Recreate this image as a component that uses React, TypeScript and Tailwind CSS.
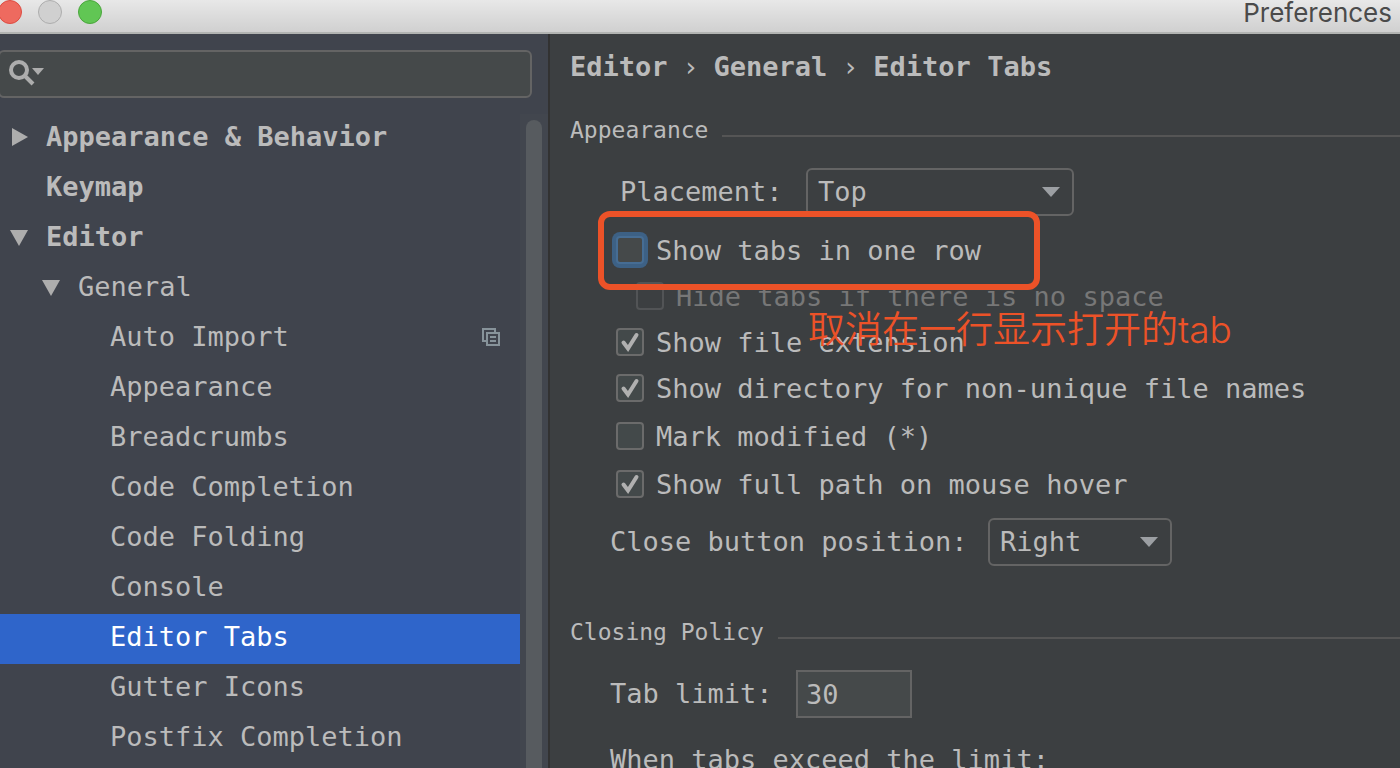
import React, { useState } from 'react';
import clsx from 'clsx';

type TreeItem = {
  label: string;
  level: 0 | 1 | 2;
  arrow?: 'right' | 'down';
  copyable?: boolean;
};

const treeItems: TreeItem[] = [
  { label: 'Appearance & Behavior', level: 0, arrow: 'right' },
  { label: 'Keymap', level: 0 },
  { label: 'Editor', level: 0, arrow: 'down' },
  { label: 'General', level: 1, arrow: 'down' },
  { label: 'Auto Import', level: 2, copyable: true },
  { label: 'Appearance', level: 2 },
  { label: 'Breadcrumbs', level: 2 },
  { label: 'Code Completion', level: 2 },
  { label: 'Code Folding', level: 2 },
  { label: 'Console', level: 2 },
  { label: 'Editor Tabs', level: 2 },
  { label: 'Gutter Icons', level: 2 },
  { label: 'Postfix Completion', level: 2 },
];

const levelPadding = ['pl-2', 'pl-10', 'pl-[72px]'];

const TreeArrow: React.FC<{ direction?: 'right' | 'down' }> = ({ direction }) => (
  <svg className="w-6 h-6 shrink-0" viewBox="0 0 24 24" fill="#adadad" aria-hidden="true">
    {direction === 'right' && <path d="M4 3v18l16-9z" />}
    {direction === 'down' && <path d="M2 5h18l-9 16z" />}
  </svg>
);

const CopyIcon = () => (
  <svg className="w-[18px] h-[18px] shrink-0" viewBox="0 0 18 18" fill="none" stroke="#87939a" strokeWidth="2" aria-hidden="true">
    <path d="M4 13H1V1h12v3" />
    <path d="M5 5h12v12H5z" />
    <path d="M8 9h6M8 13h6" />
  </svg>
);

const Sidebar = () => {
  const [selected, setSelected] = useState('Editor Tabs');

  return (
    <aside className="w-[550px] shrink-0 flex flex-col bg-[#40444d] border-r-2 border-[#323232] pt-4">
      <label className="-ml-0.5 mr-4 h-12 flex items-center rounded-md border-2 border-[#646464] bg-[#45494a]">
        <svg className="w-10 h-11 ml-[6px] shrink-0" viewBox="0 0 40 44" aria-hidden="true">
          <circle cx="13" cy="18" r="8" fill="none" stroke="#adadad" strokeWidth="4" />
          <path d="M19 24l8 8" stroke="#adadad" strokeWidth="4" />
          <path d="M26 16h12l-6 7z" fill="#adadad" />
        </svg>
        <input type="text" aria-label="Search settings" className="flex-1 min-w-0 bg-transparent outline-none px-2" />
      </label>

      <div className="flex flex-1 min-h-0 mt-4">
        <ul className="flex-1 min-w-0">
          {treeItems.map((item) => (
            <li key={item.label}>
              <button
                onClick={() => setSelected(item.label)}
                className={clsx(
                  'w-full h-[50px] flex items-center pr-5 pb-1 text-left whitespace-pre',
                  levelPadding[item.level],
                  item.level === 0 && 'font-bold',
                  selected === item.label && 'bg-[#2f65ca] text-white',
                )}
              >
                <TreeArrow direction={item.arrow} />
                <span className="flex-1 ml-[14px]">{item.label}</span>
                {item.copyable && <CopyIcon />}
              </button>
            </li>
          ))}
        </ul>
        <div className="w-7 flex justify-center pt-[6px] bg-[#42464e]">
          <div className="w-4 h-full rounded-t-full bg-[#575b5f]" />
        </div>
      </div>
    </aside>
  );
};

type CheckRowProps = {
  id: string;
  label: string;
  defaultChecked?: boolean;
  disabled?: boolean;
  focused?: boolean;
};

const CheckRow: React.FC<CheckRowProps> = ({ id, label, defaultChecked, disabled, focused }) => (
  <div className="h-full flex items-center">
    <span className="grid w-7 h-7 shrink-0">
      <input
        id={id}
        type="checkbox"
        defaultChecked={defaultChecked}
        disabled={disabled}
        className={clsx(
          'peer col-start-1 row-start-1 w-7 h-7 appearance-none border-2 rounded',
          focused && 'bg-[#45494a] border-[#466d94] ring-4 ring-[#3d6185]',
          disabled && 'border-[#525456]',
          !focused && !disabled && 'bg-[#43494a] border-[#6b6b6b]',
        )}
      />
      <svg
        className="col-start-1 row-start-1 w-7 h-7 hidden peer-checked:block pointer-events-none"
        viewBox="0 0 28 28"
        fill="none"
        stroke="#b0b0b0"
        strokeWidth="4"
        strokeLinecap="round"
        aria-hidden="true"
      >
        <path d="M7.500 14.500l4.500 6L20.500 7" />
      </svg>
    </span>
    <label htmlFor={id} className={clsx('ml-3 pt-[2px] whitespace-pre', disabled && 'text-[#777777]')}>
      {label}
    </label>
  </div>
);

const SelectBox: React.FC<{ id: string; options: string[]; className: string }> = ({ id, options, className }) => (
  <span className={clsx('grid h-12', className)}>
    <select
      id={id}
      className="col-start-1 row-start-1 w-full h-12 appearance-none rounded-md border-2 border-[#646464] bg-[#3c3f41] pl-[10px]"
    >
      {options.map((option) => (
        <option key={option}>{option}</option>
      ))}
    </select>
    <svg
      className="col-start-1 row-start-1 justify-self-end self-center mr-[14px] w-[18px] h-[10px] pointer-events-none"
      viewBox="0 0 18 10"
      fill="#9c9fa3"
      aria-hidden="true"
    >
      <path d="M0 0h18l-9 10z" />
    </svg>
  </span>
);

const SectionTitle: React.FC<{ children: React.ReactNode }> = ({ children }) => (
  <div className="flex items-center gap-[14px]">
    <h2 className="text-[23px] leading-8 whitespace-pre">{children}</h2>
    <div className="flex-1 h-[2px] mt-3 bg-[#555555]" />
  </div>
);

const Crumb = () => <span className="w-[46px] text-center font-normal">›</span>;

export default function App() {
  return (
    <div className="h-screen flex flex-col overflow-hidden font-['DejaVu_Sans_Mono',monospace] text-[27px] leading-8 text-[#bbbbbb]">
      {/* Title bar */}
      <header className="h-[34px] shrink-0 flex items-start justify-between bg-linear-to-b from-[#e8e8e8] to-[#d0d0d0] border-b-2 border-[#b2b4b2] pr-2">
        <div className="flex gap-4 -ml-[2px]">
          <button aria-label="Close" className="w-6 h-6 rounded-full border border-[#dd4c42] bg-[#ee6a5f]" />
          <button aria-label="Minimize" className="w-6 h-6 rounded-full border border-[#adadad] bg-[#d0d0d0]" />
          <button aria-label="Zoom" className="w-6 h-6 rounded-full border border-[#4aa63c] bg-[#61c654]" />
        </div>
        <h1 className="font-[Inter,sans-serif] text-[26px] leading-[26px] text-[#4b4b4b]">Preferences</h1>
      </header>

      <div className="flex flex-1 min-h-0">
        <Sidebar />

        <main className="flex-1 min-w-0 bg-[#3c3f41] pl-5 pt-[17px] overflow-hidden">
          <nav aria-label="Breadcrumb" className="flex font-bold">
            <span>Editor</span>
            <Crumb />
            <span>General</span>
            <Crumb />
            <span>Editor Tabs</span>
          </nav>

          <section className="mt-[31px]">
            <SectionTitle>Appearance</SectionTitle>

            <div className="flex items-center mt-[22px] pl-[50px] gap-[26px]">
              <label htmlFor="placement" className="w-40 whitespace-nowrap">Placement:</label>
              <SelectBox id="placement" options={['Top', 'Bottom', 'Left', 'Right', 'None']} className="w-[268px]" />
            </div>

            <div className="mt-[11px] pl-[46px]">
              <div className="relative h-[46px]">
                <CheckRow id="one-row" label="Show tabs in one row" focused />
                {/* Highlight and note drawn over the form */}
                <div className="absolute z-10 -left-[18px] -top-4 w-[442px] h-[79px] rounded-xl border-[6px] border-[#ec5228] pointer-events-none" />
                <p className="absolute z-10 left-[192px] top-20 font-['Inter','Noto_Sans_CJK_SC',sans-serif] font-[350] text-[37px] leading-[46px] text-[#ec5228] whitespace-nowrap pointer-events-none">
                  取消在一行显示打开的tab
                </p>
              </div>
              <div className="h-[46px] pl-5">
                <CheckRow id="hide-tabs" label="Hide tabs if there is no space" disabled />
              </div>
              <div className="h-[46px]">
                <CheckRow id="extension" label="Show file extension" defaultChecked />
              </div>
              <div className="h-[46px]">
                <CheckRow id="directory" label="Show directory for non-unique file names" defaultChecked />
              </div>
              <div className="h-[49px]">
                <CheckRow id="modified" label="Mark modified (*)" />
              </div>
              <div className="h-12">
                <CheckRow id="full-path" label="Show full path on mouse hover" defaultChecked />
              </div>
            </div>

            <div className="flex items-center mt-[10px] pl-10 gap-[26px]">
              <label htmlFor="close-position" className="w-[352px] whitespace-nowrap">Close button position:</label>
              <SelectBox id="close-position" options={['Right', 'Left', 'None']} className="w-[184px]" />
            </div>
          </section>

          <section className="mt-[50px]">
            <SectionTitle>Closing Policy</SectionTitle>

            <div className="flex items-center mt-[22px] pl-10 gap-[26px]">
              <label htmlFor="tab-limit" className="w-40 whitespace-nowrap">Tab limit:</label>
              <input
                id="tab-limit"
                type="text"
                defaultValue="30"
                className="w-[116px] h-12 border-2 border-[#646464] bg-[#45494a] px-2"
              />
            </div>

            <p className="mt-[26px] pl-10 whitespace-pre">When tabs exceed the limit:</p>
          </section>
        </main>
      </div>
    </div>
  );
}
